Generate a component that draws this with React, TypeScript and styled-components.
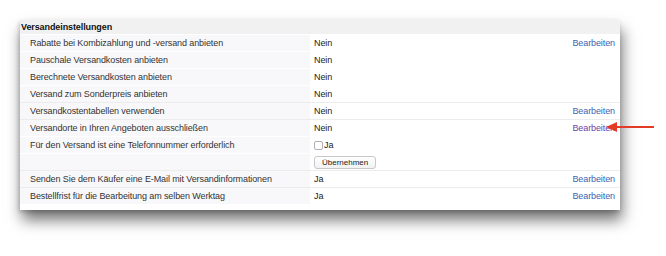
import React from "react";
import styled, { createGlobalStyle } from "styled-components";

const Global = createGlobalStyle`
  html, body { margin: 0; padding: 0; background: #ffffff; }
  body { width: 666px; height: 256px; overflow: hidden; font-family: "Liberation Sans", Arial, sans-serif; }
`;

const Page = styled.div`
  position: relative;
  width: 666px;
  height: 256px;
  padding: 20px 0 0 20px;
  box-sizing: border-box;
`;

const Panel = styled.div`
  width: 600px;
  padding-bottom: 6px;
  background: #ffffff;
  box-shadow: 2px 10px 14px rgba(0, 0, 0, 0.55), -1px 2px 4px rgba(0, 0, 0, 0.18);
  font-size: 9px;
  letter-spacing: -0.1px;
  color: #222;
`;

const Header = styled.div`
  height: 14px;
  line-height: 14px;
  background: #f1f1f1;
  font-weight: bold;
  padding-left: 1px;
  color: #111;
`;

const Row = styled.div<{ $line?: boolean }>`
  display: grid;
  grid-template-columns: 290px 1fr auto;
  height: 17px;
  align-items: center;
  border-top: 1px solid ${(p) => (p.$line ? "#ececec" : "transparent")};
  box-sizing: border-box;
`;

const Label = styled.div`
  height: 100%;
  display: flex;
  align-items: center;
  background: #f8f8fb;
  padding-left: 10px;
  color: #333;
`;

const Value = styled.div`
  padding-left: 4px;
  display: flex;
  align-items: center;
  gap: 1px;
  color: #222;
`;

const Edit = styled.a<{ $visited?: boolean }>`
  padding-right: 5px;
  color: ${(p) => (p.$visited ? "#6a3fa6" : "#3b64b3")};
  text-decoration: none;
`;

const Box = styled.span`
  width: 9px;
  height: 9px;
  border: 1px solid #b0b0b0;
  border-radius: 2px;
  background: #fff;
  box-sizing: border-box;
`;

const Btn = styled.button`
  font-family: "Liberation Sans", Arial, sans-serif;
  font-size: 8px;
  height: 13px;
  padding: 0 7px;
  line-height: 11px;
  border: 1px solid #c8c8c8;
  border-radius: 3px;
  background: linear-gradient(#ffffff, #f2f2f2);
  color: #222;
`;

const Arrow = styled.svg`
  position: absolute;
  left: 606px;
  top: 121px;
`;

type R = { label: string; value: React.ReactNode; edit?: boolean; visited?: boolean; line?: boolean };

const rows: R[] = [
  { label: "Rabatte bei Kombizahlung und -versand anbieten", value: "Nein", edit: true },
  { label: "Pauschale Versandkosten anbieten", value: "Nein" },
  { label: "Berechnete Versandkosten anbieten", value: "Nein" },
  { label: "Versand zum Sonderpreis anbieten", value: "Nein" },
  { label: "Versandkostentabellen verwenden", value: "Nein", edit: true, line: true },
  { label: "Versandorte in Ihren Angeboten ausschließen", value: "Nein", edit: true, visited: true, line: true },
  { label: "Für den Versand ist eine Telefonnummer erforderlich", value: (<><Box />Ja</>) },
  { label: "", value: <Btn>Übernehmen</Btn> },
  { label: "Senden Sie dem Käufer eine E-Mail mit Versandinformationen", value: "Ja", edit: true, line: true },
  { label: "Bestellfrist für die Bearbeitung am selben Werktag", value: "Ja", edit: true, line: true },
];

export default function App() {
  return (
    <Page>
      <Global />
      <Panel>
        <Header>Versandeinstellungen</Header>
        {rows.map((r, i) => (
          <Row key={i} $line={r.line}>
            <Label>{r.label}</Label>
            <Value>{r.value}</Value>
            {r.edit ? <Edit $visited={r.visited}>Bearbeiten</Edit> : <span />}
          </Row>
        ))}
      </Panel>
      <Arrow width="50" height="12" viewBox="0 0 50 12">
        <line x1="8" y1="6" x2="48" y2="6" stroke="#e23b26" strokeWidth="2" />
        <polygon points="0,6 11,1 11,11" fill="#e23b26" />
      </Arrow>
    </Page>
  );
}
